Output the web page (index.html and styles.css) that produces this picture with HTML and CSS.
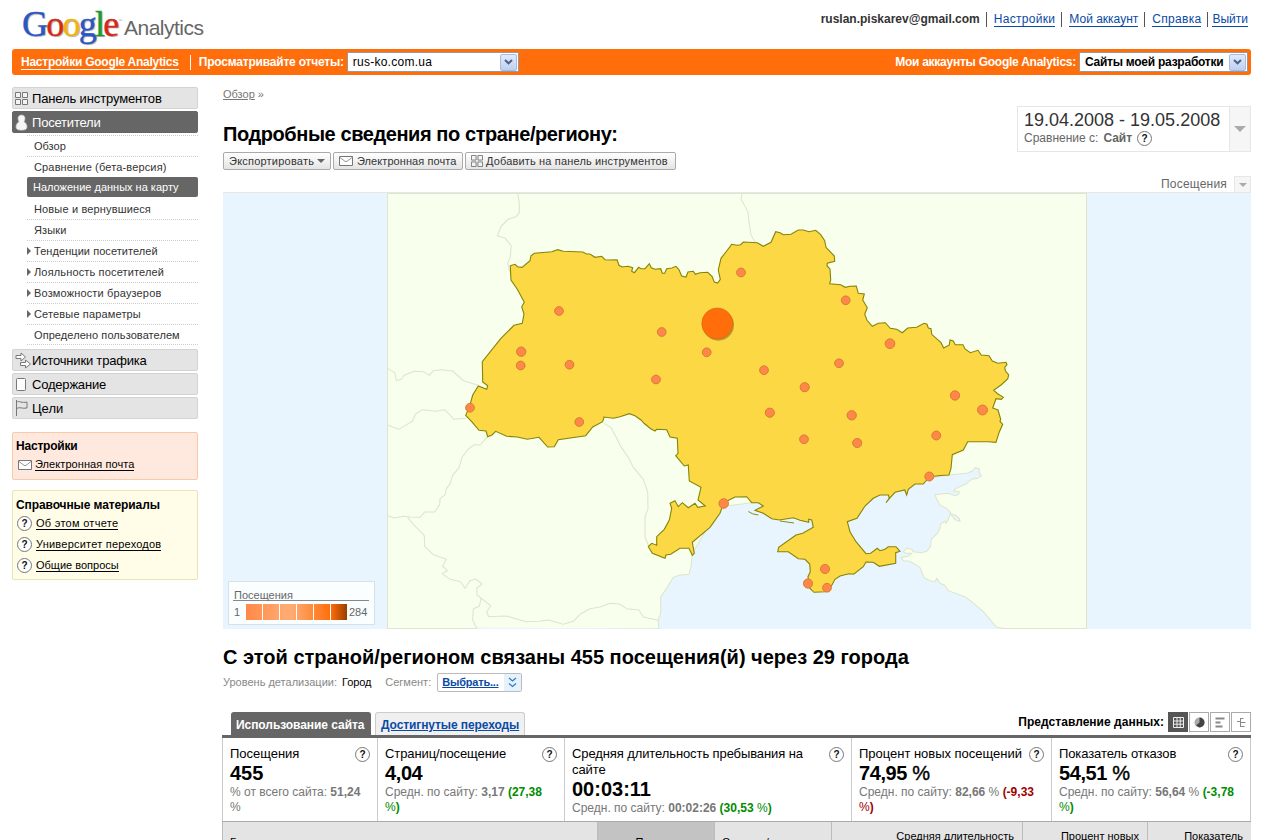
FILE: index.html
```html
<!DOCTYPE html>
<html lang="ru">
<head>
<meta charset="utf-8">
<title>Google Analytics</title>
<link rel="stylesheet" href="styles.css">
</head>
<body>
<svg class="defs" width="0" height="0">
  <symbol id="mail" viewBox="0 0 14 10"><path d="M.5.5h13v9H.5z" fill="#fff" stroke="#777"/><path d="M1 1.500l5 3.800q1 .6 2 0l5-3.800" fill="none" stroke="#888" stroke-width=".9"/></symbol>
  <symbol id="grid" viewBox="0 0 13 13"><path d="M.5.5h5v5h-5zM7.500.5h5v5h-5zM.5 7.500h5v5h-5zM7.500 7.500h5v5h-5z" fill="#f4f4f4" stroke="#777"/></symbol>
  <symbol id="chev" viewBox="0 0 9 6"><path d="M1 1l3.500 3.300L8 1" fill="none" stroke="#4d6185" stroke-width="2"/></symbol>
</svg>
<header class="top">
  <div class="logo"><span class="google"><i class="b">G</i><i class="r">o</i><i class="y">o</i><i class="b">g</i><i class="g">l</i><i class="r">e</i></span><span class="tm">™</span><span class="an">Analytics</span></div>
  <nav class="account"><b>ruslan.piskarev@gmail.com</b><a class="n1">Настройки</a><a class="n2">Мой аккаунт</a><a class="n3">Справка</a><a class="n4">Выйти</a></nav>
</header>
<div class="bar">
  <a class="set">Настройки Google Analytics</a><span class="view">Просматривайте отчеты:</span>
  <span class="select s1"><span>rus-ko.com.ua</span><i><svg width="9" height="6"><use href="#chev"/></svg></i></span>
  <span class="mine">Мои аккаунты Google Analytics:</span>
  <span class="select s2"><span>Сайты моей разработки</span><i><svg width="9" height="6"><use href="#chev"/></svg></i></span>
</div>
<div class="page">
<aside>
  <div class="sec"><svg width="13" height="13"><use href="#grid"/></svg><span class="t1">Панель инструментов</span></div>
  <div class="sec on"><svg width="13" height="17" viewBox="0 0 13 17"><path d="M6.500 1C4 1 3 2.500 3 4.500c0 1.500.5 2.500 1 3.200C2 9 1 10.500 1 13c0 2.500 2 3.200 5.500 3.200S12 15.500 12 13c0-2.500-1-4-3-5.300.5-.7 1-1.700 1-3.200C10 2.500 9 1 6.500 1z" fill="#f6f6f6" stroke="#bbb" stroke-width=".7"/></svg><span class="t2">Посетители</span></div>
  <ul>
    <li><span class="l1">Обзор</span></li>
    <li><span class="l2">Сравнение (бета-версия)</span></li>
    <li class="cur"><span class="l3">Наложение данных на карту</span></li>
    <li><span class="l4">Новые и вернувшиеся</span></li>
    <li><span class="l5">Языки</span></li>
    <li class="sub"><span class="l6">Тенденции посетителей</span></li>
    <li class="sub"><span class="l7">Лояльность посетителей</span></li>
    <li class="sub"><span class="l8">Возможности браузеров</span></li>
    <li class="sub"><span class="l9">Сетевые параметры</span></li>
    <li><span class="l10">Определено пользователем</span></li>
  </ul>
  <div class="sec"><svg class="wide" width="17" height="17" viewBox="0 0 17 17"><path d="M1 3.500h5V1l4.500 4L6 9V6.500H1zM5.500 10.500h5V8l5 4-5 4v-2.500h-5z" fill="#fff" stroke="#777"/></svg><span class="t3">Источники трафика</span></div>
  <div class="sec"><svg width="13" height="13" viewBox="0 0 13 13"><rect x="1.500" y=".5" width="9" height="12" rx="1" fill="#fff" stroke="#777"/></svg><span class="t4">Содержание</span></div>
  <div class="sec"><svg width="13" height="16" viewBox="0 0 13 16"><path d="M1.500 0v16M1.500 2c3-1.500 5 1.500 10.500 0v6c-5 1-7-1.500-10.500.5" fill="none" stroke="#777"/></svg><span class="t5">Цели</span></div>
  <div class="box pink"><h4>Настройки</h4><div class="row"><svg width="14" height="10"><use href="#mail"/></svg><a class="h0">Электронная почта</a></div></div>
  <div class="box cream"><h4 class="hh">Справочные материалы</h4>
    <div class="row"><b class="q">?</b><a class="h1">Об этом отчете</a></div>
    <div class="row"><b class="q">?</b><a class="h2">Университет переходов</a></div>
    <div class="row"><b class="q">?</b><a class="h3">Общие вопросы</a></div>
  </div>
</aside>
<main>
  <div class="head">
    <div>
      <div class="crumb"><a>Обзор</a> »</div>
      <h1>Подробные сведения по стране/региону:</h1>
      <div class="buttons">
        <span class="btn b1"><span>Экспортировать</span><i class="tri"></i></span>
        <span class="btn b2"><svg width="14" height="10"><use href="#mail"/></svg><span>Электронная почта</span></span>
        <span class="btn b3"><svg width="12" height="12"><use href="#grid"/></svg><span>Добавить на панель инструментов</span></span>
      </div>
    </div>
    <div class="right">
      <div class="date"><div class="dt"><div class="d1">19.04.2008 - 19.05.2008</div><div class="d2"><span>Сравнение с:</span><b>Сайт</b><b class="q">?</b></div></div><div class="dd"><i class="tri"></i></div></div>
      <div class="metric"><span>Посещения</span><div class="dd"><i class="tri"></i></div></div>
    </div>
  </div>
  <div class="map">
    <svg width="1028" height="436" viewBox="223 193 1028 436">
      <rect x="223" y="193" width="1028" height="436" fill="#e8f5ff"/>
      <path d="M387.500 193.500h699v435h-699z" fill="#f8ffec" stroke="#dde5cc"/>
      <path d="M477 627.500L659 628.600 659 629H477z" fill="#e8f5ff"/>
      <g transform="translate(620 440) scale(.333333)" stroke="#dde5cc" stroke-width="3.200" fill="#e8f5ff">
        <path d="M117 570L114 540 122 520 122 470 140 445 160 412 180 405 207 403 213 380 217 340 300 200 700 150 987 105 1040 100 1058 93 1065 83 1078 87 1077 97 1084 107 1073 115 1055 118 1036 133 1008 145 1000 152 1018 156 1016 163 1005 167 985 160 945 164 950 178 960 196 980 205 992 218 984 240 978 250 975 243 962 252 960 265 952 280 934 297 931 320 920 334 905 338 880 335 875 328 860 325 850 335 857 340 875 340 865 348 843 353 850 362 870 364 900 383 912 413 930 422 945 425 950 415 960 430 973 435 985 452 1035 470 1057 487 1090 515 1130 562 1155 566 1160 570z"/>
        <path d="M992 222l12 17 16 5-2-8-12-10z"/>
      </g>
      <g transform="translate(380 190) scale(.333333)" stroke="#dde5cc" stroke-width="3.200" fill="none" stroke-linejoin="round">
        <path d="M413 10L418 40 418 68 408 80 385 87 364 108 352 137 376 145 394 168 390 205 383 220 387 240 394 255"/>
        <path d="M24 536L44 548 49 572 65 567 72 556 103 544 130 545 148 556 160 542 185 539 218 543 250 572 295 586"/>
        <path d="M24 706L56 718 76 706 97 694 107 672 128 659 167 664 194 659 209 674 222 688 258 685"/>
        <path d="M323 740L300 765 284 764 265 777 246 802 237 833 218 856 211 880 199 896 196 914 180 926 179 944 164 966 134 966 120 982 90 981 70 979 43 984 24 977"/>
        <path d="M83 982L100 1003 133 1037 134 1069 160 1094 199 1108 188 1128 202 1142 186 1151 210 1168 242 1175 255 1195 270 1172 287 1167 306 1182 290 1195 291 1215 332 1247 320 1266 326 1280 380 1278 438 1295 480 1294 505 1290 550 1303 580 1294 600 1273 630 1256 660 1251 690 1240 718 1242 740 1256 777 1260 790 1281 832 1290"/>
        <path d="M303 1225L298 1249 280 1256 278 1290 290 1315"/>
        <path d="M672 700L692 712 708 740 722 769 745 802 758 829 790 868 803 905 804 955 795 980 795 1040 806 1068"/>
      </g>
      <path d="M742 193l-1 6 7 13 1 10 2 13 4 7" stroke="#dde5cc" fill="none"/>
      <path class="country" d="M510.300 265.700L515 264.300 517.500 266.700 522 267.300 530 260.700 531 255.700 534.300 253.300 551.700 251.700 557.700 249.700 563.300 251.300 582.700 252 586.700 254 590 254 595 257.300 601.700 256.300 605 259.700 610 260 617 259.700 619 265.300 622 267 628 266.300 632.700 267.700 631.700 271.300 634.300 272.700 638.700 267.300 641 268.700 645 268.700 649.300 263.700 651.300 267.700 655 269.300 660.700 268.700 662.300 273.300 664.700 273.300 666.700 268.700 672 268 676 266.300 679 269.700 681.700 276 686 277 688 272 693.300 271.300 695.300 274.300 700 272.700 707.700 272.300 712 276.300 714.300 282 717.700 283 720.300 279.300 718.300 270 721 258.300 726.700 251 731.700 244.300 737 245.300 740.700 244.700 743.300 242 757.300 242.700 763.300 246.300 771 242.300 775.700 231.700 780 232.700 783.300 234.700 791 234.300 798.300 230 803.300 230 809 231.700 815.700 230.300 820.700 234.700 824.700 240.700 826 247.300 834.300 256 834.700 261.300 827.300 263.300 827 265.700 830 269 830.700 280 829.700 283.700 840.700 284.700 845.300 287.300 850 286.300 856.300 286 858.300 293.300 864.300 294 862.700 300 867.300 307.700 864.700 314.300 867 320.300 872.300 326.300 878.300 323.300 885.300 322.700 890.300 328.300 896.700 329.300 902.300 332.700 907.700 328 916.700 327.300 924 323.300 927 324.300 928.300 328 931 328.700 931.700 334.300 941 342.700 943.700 348 949.300 345 950 340 953.300 341 955.300 344.700 963 344.700 965 349 970.300 352.700 978 350.300 981.300 355 989 355.700 992.300 361 998 363.300 1006 362.300 1007 364.700 1004.700 367.300 1005.500 371 1008.700 375 1007.700 379 1001 385 993.700 390.300 998 394 1003.300 397.300 1001.300 399.300 996 398.700 992.700 408 998 410 1000.700 419.300 1000 421.300 1002.700 424.300 999 432.700 996 442.300 988.300 441.700 967.700 441.700 963.300 450 952.300 454.700 951 468.300 949 475 940 475.500 929.300 477 923.300 484 915 484 908.300 489.300 906.700 495 904.700 490 895 492.300 889.300 498.700 886 502.700 889.300 498 888.300 495 880 495 873.300 498.300 865 506 857 518.300 847.300 521.700 850 531.700 856 541.700 866 553.700 870.700 553.300 877.300 548.300 880 550.700 885 549.300 888.300 546.700 896 546.700 900 551.300 895.700 552.700 895.700 563.300 879.300 566.300 873.300 562.300 866 562 863.300 566.700 853.700 574.300 849 573.700 840 576 835 579.300 831 586.700 825 591.700 814 592.300 809.300 587.700 808 576.700 810.300 571.700 809.700 564 805 559.300 798.300 558.700 788.300 551.700 777.700 551.700 778.700 547.300 796 535 802.700 533.300 813.300 527.300 811.700 520 808.700 519.300 808.700 522.300 800 520.300 793.300 517.700 779.300 520 771.700 518.700 763.300 513.300 755 510.300 763.300 506 758.300 502.700 751.700 502.700 746.700 496.700 735 497 723.700 502.700 720 513.300 710 527.300 692.300 542.300 694.300 553.300 692.300 555.300 689 548.300 680 548.300 670.700 554.300 666 555 665 558.300 652.300 553.300 648.300 546.700 651.700 543.300 656.700 545.300 656.700 536.700 664.300 529.300 669.300 520 671.700 508.300 670 503.300 675 500.700 678.300 506.700 682.300 502.700 688.300 507.700 695 503.300 697.700 507.300 705.300 506 698 500 701 487.300 689.300 481 688.300 465 684.300 466 675.700 455.700 678 453.300 677.300 438.300 670 437 666.700 429.700 656.700 429.300 655 431 650.700 428.700 644 423.300 641 420 635 415.700 629.300 413.700 620 416.700 613.300 418.300 604 417 602.700 421.700 592.700 427 585.700 435.700 558.300 439.700 554.300 446.700 547.700 447 539 437.300 527.300 439.300 517.300 437 506.700 436.300 495.700 431.300 492 435 487.700 436.700 486 431 479 430.300 471.700 421.700 465.700 415.300 470 405 472.700 395 478.300 386 486.700 389.300 487.700 385.700 482.700 382 482.300 361.700 500.700 338.700 514 325.300 522.300 323.300 524 314 521.700 306.700 524.300 302.300 517.300 289.300 511 280z"/>
      <path d="M748.300 511.500q4 3 10 3.500M780 521l14 2" fill="none" stroke="#8a8a10"/>
      <circle cx="718.300" cy="325" r="15.700" fill="#b59b36"/>
      <circle cx="717.300" cy="323.500" r="15.500" fill="#ff6e0a" stroke="#dd6a10" stroke-width=".7"/>
      <g class="dots">
        <circle cx="741" cy="272.500" r="4.300"/><circle cx="559" cy="311" r="4.300"/><circle cx="661.700" cy="332" r="4.300"/><circle cx="706.700" cy="352.300" r="4.300"/><circle cx="521.200" cy="351.700" r="4.600"/><circle cx="520.700" cy="365.500" r="4.300"/><circle cx="569.500" cy="364.700" r="4.300"/><circle cx="656" cy="379.500" r="4.300"/><circle cx="470" cy="407.700" r="4.300"/><circle cx="579.300" cy="422" r="4.300"/><circle cx="845.700" cy="300.300" r="4.300"/><circle cx="890" cy="343.700" r="4.800"/><circle cx="839" cy="363.300" r="4.300"/><circle cx="764" cy="370.200" r="4.300"/><circle cx="804.700" cy="387.200" r="4.500"/><circle cx="769.800" cy="412.700" r="4.500"/><circle cx="851.700" cy="415.300" r="4.600"/><circle cx="804" cy="439.300" r="4.300"/><circle cx="857.200" cy="443" r="4.500"/><circle cx="955" cy="395.500" r="4.600"/><circle cx="982.500" cy="410" r="4.900"/><circle cx="936.300" cy="435.500" r="4.400"/><circle cx="929.300" cy="476.500" r="4.400"/><circle cx="723.700" cy="503.500" r="4.700"/><circle cx="825" cy="569" r="4.500"/><circle cx="808" cy="583.500" r="4.500"/><circle cx="827" cy="587.700" r="4.300"/>
      </g>
    </svg>
    <div class="legend"><div class="lt">Посещения</div><div class="scale"><span>1</span><div class="sw"><i></i><i></i><i></i><i></i><i></i></div><i class="last"></i><span class="mx">284</span></div></div>
  </div>
  <h2>С этой страной/регионом связаны 455 посещения(й) через 29 города</h2>
  <div class="level"><span class="v1">Уровень детализации:</span><span class="v2">Город</span><span class="v3">Сегмент:</span><span class="pick"><b>Выбрать...</b><i><svg width="9" height="11" viewBox="0 0 9 11"><path d="M1 1l3.500 3L8 1M1 6.500l3.500 3 3.500-3" fill="none" stroke="#3a78c8" stroke-width="1.300"/></svg></i></span></div>
  <div class="tabs"><span class="tab act">Использование сайта</span><span class="tab"><a>Достигнутые переходы</a></span>
    <b class="repr">Представление данных:</b>
    <div class="icons"><i class="dark"><svg width="11" height="11"><path d="M.5.5h10v10H.5zM4 .5v10M7.200.5v10M.5 4h10M.5 7.200h10" fill="none" stroke="#eee"/></svg></i><i><svg width="11" height="11"><circle cx="5.500" cy="5.500" r="5" fill="#aaa"/><path d="M5.500 5.500V.5a5 5 0 0 1 0 10L2 8.500z" fill="#444"/></svg></i><i><svg width="11" height="11"><path d="M.5 1.500h9M.5 5.500h5M.5 9.500h7" stroke="#888" stroke-width="2"/></svg></i><i><svg width="11" height="11"><path d="M4.500 1v9M4.500 1.500h3M1 4.500h3.500M4.500 5.500h5M4.500 9.500h4" stroke="#888" fill="none"/></svg></i></div>
  </div>
  <div class="cards">
    <div><b class="q">?</b><p class="c1">Посещения</p><strong>455</strong><small>% от всего сайта: <b>51,24</b><br>%</small></div>
    <div><b class="q">?</b><p class="c2">Страниц/посещение</p><strong class="cm">4,04</strong><small>Средн. по сайту: <b>3,17 <em>(27,38<br><u>%</u>)</em></b></small></div>
    <div><b class="q">?</b><p class="c3">Средняя длительность пребывания на<br>сайте</p><strong>00:03:11</strong><small>Средн. по сайту: <b>00:02:26 <em>(30,53 <u>%</u>)</em></b></small></div>
    <div><b class="q">?</b><p class="c4">Процент новых посещений</p><strong class="cm">74,95 <u>%</u></strong><small>Средн. по сайту: <b>82,66 <u>%</u> <em class="neg">(-9,33<br><u>%</u>)</em></b></small></div>
    <div><b class="q">?</b><p class="c5">Показатель отказов</p><strong class="cm">54,51 <u>%</u></strong><small>Средн. по сайту: <b>56,64 <u>%</u> <em>(-3,78<br><u>%</u>)</em></b></small></div>
  </div>
  <div class="thead"><div class="low">Город</div><div class="low sort">Посещения&nbsp; ↓</div><div class="low">Страниц/посещение</div><div class="up">Средняя длительность</div><div class="up">Процент новых</div><div class="up">Показатель</div></div>
</main>
</div>
</body>
</html>
```
FILE: styles.css
```css
* { box-sizing: border-box; }
body { margin: 0; width: 1263px; height: 840px; overflow: hidden; background: #fff; font: 11px "Liberation Sans", Arial, sans-serif; color: #333; }
i, em { font-style: normal; }
h1, h2, h4, p, ul { margin: 0; padding: 0; }
span, a, b, h1, h2, h4 { white-space: nowrap; }
u { text-decoration: none; font-weight: normal; }
.defs { display: none; }
.top { height: 49px; display: flex; justify-content: space-between; padding: 0 15px 0 22px; }
.logo { display: flex; height: 49px; }
.google { font: 36px/49px "Liberation Serif", serif; letter-spacing: -1.75px; text-shadow: 1px 1px 1px #aaa; width: 96px; display: flex; }
.google i { -webkit-text-stroke: .4px currentColor; }
.b { color: #2a56c6; } .r { color: #d22a16; } .y { color: #efb50e; } .g { color: #1e9c30; }
.tm { font-size: 4px; line-height: 5px; height: 5px; margin-top: 18px; color: #999; width: 6px; }
.an { font-size: 21px; line-height: 56px; height: 49px; color: #666; letter-spacing: -.5px; }
.account { display: flex; font-size: 12px; line-height: 14px; margin-top: 13px; height: 14px; }
.account a { color: #0a4aa6; border-bottom: 1px solid #0a4aa6; position: relative; margin-left: 14px; height: 14px; line-height: 13px; }
.account b { line-height: 13px; }
.account a::before { content: ""; position: absolute; left: -8px; top: -1px; height: 15px; border-left: 1px solid #555; }
.account .n4 { margin-left: 11px; } .account .n4::before { left: -5px; }
.account .n1, .account .n3 { letter-spacing: .3px; }
.bar { margin: 0 12px; height: 26px; border-radius: 3px; background: #ff6e0a; display: flex; align-items: center; color: #fff; font: bold 12px "Liberation Sans", Arial, sans-serif; letter-spacing: -.25px; }
.set { margin-left: 9px; border-bottom: 1px solid #fff; line-height: 13px; padding-top: 1px; }
.view { margin-left: 11px; border-left: 1px solid #fff; padding-left: 8px; line-height: 15px; letter-spacing: -.2px; }
.select { height: 20px; border: 1px solid #999; background: #fff; color: #000; display: flex; justify-content: space-between; align-items: center; padding: 0 1px 0 5px; }
.select i { width: 17px; height: 17px; border: 1px solid #a9bcdc; border-radius: 2px; background: linear-gradient(#e0eafb, #bed0f2); display: flex; align-items: center; justify-content: center; flex: none; }
.s1 { width: 172px; margin-left: 3px; font-weight: normal; letter-spacing: .25px; }
.mine { margin-left: auto; }
.s2 { width: 169px; margin: 0 3px 0 3px; }
.page { display: flex; padding: 12px 12px 0; }
aside { width: 186px; margin-right: 25px; flex: none; }
.sec { height: 22px; margin-bottom: 2px; border: 1px solid #d3d3d3; border-radius: 2px; background: #e4e4e4; display: flex; align-items: center; font-size: 13px; color: #000; padding-left: 2px; letter-spacing: -.2px; }
.sec svg { margin-right: 4px; flex: none; } .sec .wide { margin-right: 0; }
.sec.on { background: #666; border-color: #666; color: #fff; }
.sec .t1 { letter-spacing: -.13px; } .sec .t5 { letter-spacing: 0; }
ul { list-style: none; margin: 0 0 4px 15px; }
li { height: 21px; line-height: 20px; border-top: 1px dotted #ccc; padding-left: 7px; color: #333; position: relative; letter-spacing: .15px; }
li:last-child { border-bottom: 1px dotted #ccc; }
li.cur { height: 20px; line-height: 21px; background: #666; border: 0; border-radius: 2px; color: #fff; padding-left: 6px; margin-bottom: 2px; letter-spacing: 0; }
li.cur + li { border-top: 0; height: 20px; line-height: 20px; }
.l1 { letter-spacing: 0; } .l6 { letter-spacing: .06px; } .l10 { letter-spacing: .08px; }
.sub::before { content: ""; position: absolute; left: 0; top: 6px; border: 4px solid transparent; border-left-color: #666; border-right: 0; }
.box { margin-top: 13px; border: 1px solid #fbc9a5; border-radius: 2px; background: #ffe9df; padding: 6px 3px; height: 48px; color: #000; }
.box h4 { font-size: 12px; line-height: 14px; height: 15px; letter-spacing: -.2px; }
.box .hh { letter-spacing: -.1px; }
.box .row { height: 21px; display: flex; align-items: center; line-height: 12px; }
.pink .row svg { margin: 0 3px 0 2px; }
.box a { border-bottom: 1px solid #000; }
.h0 { letter-spacing: .07px; } .h1 { letter-spacing: .28px; } .h2 { letter-spacing: .22px; }
.cream { margin-top: 10px; height: 90px; background: #fffde8; border-color: #e8e4b8; padding: 7px 3px; }
.cream .q { margin: 0 4px 0 1px; }
.q { width: 15px; height: 15px; border: 1px solid #777; border-radius: 50%; background: #fff; color: #111; font: bold 10px/13px "Liberation Sans", Arial, sans-serif; text-align: center; flex: none; display: inline-block; letter-spacing: 0; }
main { width: 1028px; flex: none; }
.head { display: flex; justify-content: space-between; height: 105px; }
.crumb { line-height: 14px; color: #777; } .crumb a { text-decoration: underline; }
h1 { font-size: 20px; line-height: 24px; margin-top: 21px; color: #000; letter-spacing: -.42px; }
.buttons { display: flex; gap: 2px; margin-top: 6px; }
.btn { height: 18px; border: 1px solid #aaa; border-radius: 2px; background: linear-gradient(#fff, #e4e4e4); display: flex; align-items: center; padding-left: 5px; gap: 3px; color: #333; }
.b1 { width: 108px; letter-spacing: .22px; } .b2 { width: 130px; gap: 4px; letter-spacing: .07px; } .b3 { width: 211px; letter-spacing: .16px; }
.tri { border: 4px solid transparent; border-top-color: #666; border-bottom: 0; display: block; }
.right { width: 234px; margin-top: 19px; }
.date { height: 46px; border: 1px solid #e6e6e6; display: flex; }
.dt { width: 211px; padding: 2px 0 0 6px; } .dd { flex: 1; background: #f6f6f6; border-left: 1px solid #e6e6e6; display: flex; align-items: center; justify-content: center; }
.dd .tri { border-width: 6px 6px 0; border-top-color: #aaa; }
.d1 { font-size: 18px; line-height: 22px; white-space: nowrap; }
.d2 { display: flex; align-items: center; font-size: 12px; color: #666; gap: 5px; line-height: 15px; }
.metric { height: 17px; margin-top: 24px; display: flex; justify-content: flex-end; font-size: 12px; line-height: 16px; color: #666; letter-spacing: .2px; }
.metric .dd { flex: none; width: 17px; border: 1px solid #e6e6e6; margin-left: 7px; } .metric .tri { border-width: 4px 4px 0; }
.map { height: 437px; border-top: 1px solid #e6e6e6; position: relative; }
.map svg { display: block; }
.country { fill: #fcd844; stroke: #838508; stroke-width: 1.100; }
.dots { fill: #ff8848; stroke: #dd7638; stroke-width: .8; filter: drop-shadow(.7px .7px 0 #c79f3c); }
.legend { position: absolute; left: 5px; top: 388px; width: 147px; height: 44px; background: #fafeff; border: 1px solid #d8e2e4; padding: 7px 5px 0 4px; color: #666; }
.lt { border-bottom: 1px solid #888; line-height: 12px; height: 12px; padding-left: 1px; }
.scale { display: flex; align-items: center; height: 19px; margin-top: 1px; } .scale span { width: 13px; padding-left: 1px; }
.sw { display: flex; background: linear-gradient(90deg, #ff8848, #ffaa70 45%, #ffaa70 55%, #ff6e0a); width: 85px; height: 16px; }
.sw i { border-right: 1px solid #fff; width: 17px; }
.last { width: 16px; height: 16px; background: linear-gradient(90deg, #ff6e0a, #963f00); } .scale .mx { padding-left: 2px; }
h2 { font-size: 20px; line-height: 24px; color: #000; margin-top: 16px; }
.level { height: 20px; margin-top: 3px; display: flex; align-items: center; color: #888; } .v2 { color: #000; margin: 0 14px 0 5px; letter-spacing: -.1px; }
.pick { height: 19px; width: 85px; margin-left: 6px; border: 1px solid #bbb; border-radius: 2px; display: flex; justify-content: space-between; align-items: center; padding-left: 4px; color: #0a4aa6; text-decoration: underline; letter-spacing: -.2px; }
.pick i { background: #e4f2fc; width: 17px; height: 17px; display: flex; align-items: center; justify-content: center; }
.tabs { height: 43px; padding-top: 20px; padding-left: 8px; display: flex; align-items: flex-start; font-size: 12px; font-weight: bold; letter-spacing: -.1px; }
.tab { height: 23px; line-height: 25px; padding: 0 5px; border-radius: 3px 3px 0 0; border: 1px solid #ccc; border-bottom: 0; background: #f0f0f0; width: 150px; margin-left: 4px; color: #0a4aa6; }
.tab a { text-decoration: underline; }
.tab.act { background: #666; border-color: #666; color: #fff; width: 140px; margin: 0; padding-left: 4px; letter-spacing: -.06px; }
.repr { margin-left: auto; color: #000; line-height: 21px; margin-right: 4px; letter-spacing: .03px; }
.icons { display: flex; gap: 1px; } .icons i { width: 20px; height: 20px; border: 1px solid #aaa; display: flex; align-items: center; justify-content: center; } .icons .dark { background: #555; border-color: #555; }
.cards { display: grid; grid-template-columns: 155px 187px 287px 200px 200px; width: 1029px; height: 86px; margin-left: -1px; border-top: 3px solid #666; }
.cards > div { border-left: 1px solid #ccc; padding: 8px 7px 0; position: relative; }
.cards > div:last-child { border-right: 1px solid #ccc; }
.cards .q { position: absolute; right: 7px; top: 9px; }
.cards p { font-size: 13px; line-height: 16px; color: #000; white-space: nowrap; letter-spacing: -.1px; }
.cards .c1, .cards .c4 { letter-spacing: -.02px; }
.cards strong { display: block; font-size: 20px; line-height: 23px; color: #000; white-space: nowrap; }
.cards strong u { -webkit-text-stroke: .4px #000; }
.cards .cm { letter-spacing: -.4px; }
.cards small { display: block; font-size: 12px; line-height: 15px; color: #777; white-space: nowrap; } .cards em { color: #008c00; } .cards .neg { color: #a00000; }
.cards .sl { letter-spacing: -.05px; }
.thead { width: 1029px; margin-left: -1px; display: grid; grid-template-columns: 375px 117px 117px 191px 125px 104px; border-top: 1px solid #aaa; background: #e4e4e4; height: 60px; color: #000; }
.thead div { border-left: 1px solid #bbb; padding: 8px 8px 0 7px; } .thead .low { padding-top: 14px; } .thead .up { text-align: right; } .thead .sort { background: #c3c3c3; text-align: right; }
```
